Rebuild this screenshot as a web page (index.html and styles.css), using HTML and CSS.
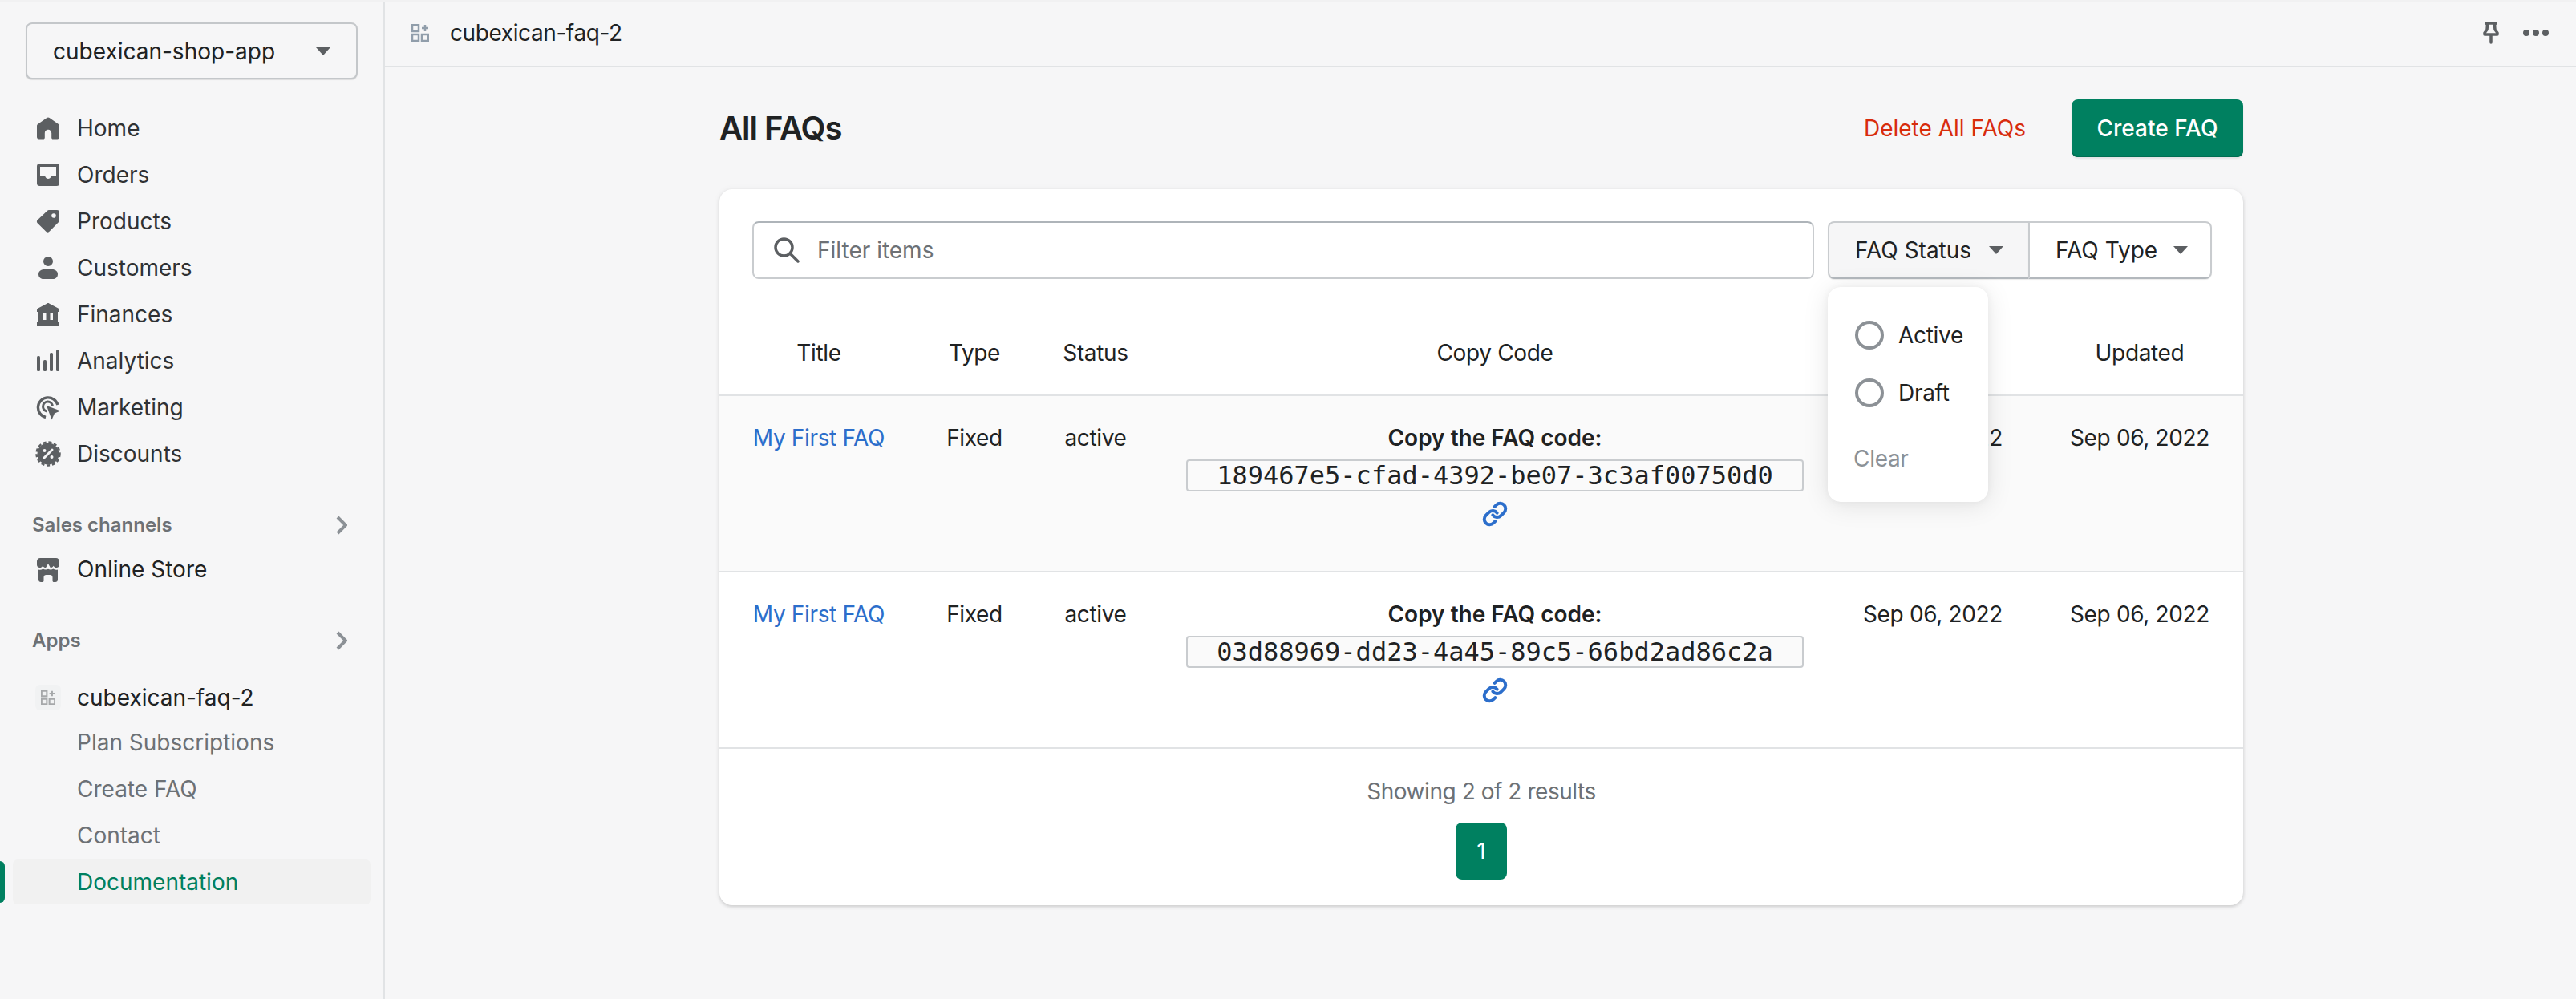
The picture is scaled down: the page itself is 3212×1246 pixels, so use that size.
FILE: index.html
```html
<!DOCTYPE html>
<html lang="en">

<head>
    <meta charset="UTF-8">
    <title>All FAQs</title>
    <link rel="stylesheet" href="styles.css">
</head>

<body>
    <div class="app">
        <aside class="sidebar">
            <div class="store-select">
                <span>cubexican-shop-app</span>
                <span class="caret"></span>
            </div>

            <nav class="nav-main">
                <a class="nav-link">
                    <svg class="nav-icon" viewBox="-2 -2 32 32"><path d="M14 .5c.6 0 1.1.2 1.6.5l11 7.7c.9.6 1.4 1.5 1.4 2.6V25c0 1.4-1.1 2.5-2.5 2.5H20c-1 0-1.8-.8-1.8-1.8V20c0-2.3-1.9-4.2-4.2-4.2S9.800 17.700 9.800 20v5.700c0 1-.8 1.800-1.800 1.800H2.500C1.100 27.500 0 26.400 0 25V11.300C0 10.200.5 9.300 1.400 8.700l11-7.700c.5-.3 1-.5 1.600-.5z"/></svg>
                    Home
                </a>
                <a class="nav-link">
                    <svg class="nav-icon" viewBox="-2 -2 32 32"><path fill-rule="evenodd" d="M3.500 0h21A3.500 3.500 0 0 1 28 3.500v21a3.500 3.500 0 0 1-3.500 3.500h-21A3.500 3.500 0 0 1 0 24.500v-21A3.500 3.500 0 0 1 3.500 0zM4 4v11h4.500c1 0 1.700.6 2 1.500.5 1.500 1.900 2.500 3.500 2.500s3-1 3.500-2.500c.3-.9 1-1.500 2-1.500H24V4z"/></svg>
                    Orders
                </a>
                <a class="nav-link">
                    <svg class="nav-icon" viewBox="-2 -2 32 32"><path fill-rule="evenodd" d="M15 0h10a3 3 0 0 1 3 3v10c0 .8-.3 1.600-.9 2.100L15.500 26.800a3 3 0 0 1-4.200 0L.9 16.400a3 3 0 0 1 0-4.200L12.900.9A3 3 0 0 1 15 0zm6 4.200a2.800 2.800 0 1 0 0 5.600 2.800 2.800 0 0 0 0-5.600z"/></svg>
                    Products
                </a>
                <a class="nav-link">
                    <svg class="nav-icon" viewBox="-2 -2 32 32"><circle cx="14" cy="6" r="6"/><path d="M9 16h10c4 0 7 2.500 7 6 0 3.500-2.500 6-6 6H8c-3.500 0-6-2.500-6-6 0-3.500 3-6 7-6z"/></svg>
                    Customers
                </a>
                <a class="nav-link">
                    <svg class="nav-icon" viewBox="-2 -2 32 32"><path fill-rule="evenodd" d="M12.800.4c.8-.4 1.600-.4 2.400 0l11.300 6.200c.9.500 1.500 1.400 1.500 2.400v2h-2v12h.5c.8 0 1.500.7 1.500 1.500V28H0v-3.500C0 23.700.7 23 1.500 23H2V11H0V9c0-1 .6-1.900 1.500-2.400zM8 12.500V21h3.500v-8.500zM16.500 12.500V21H20v-8.500z"/></svg>
                    Finances
                </a>
                <a class="nav-link">
                    <svg class="nav-icon" viewBox="-2 -2 32 32"><rect x="0" y="8" width="4" height="19" rx="1.500"/><rect x="8" y="13" width="4" height="14" rx="1.500"/><rect x="16" y="4" width="4" height="23" rx="1.500"/><rect x="24" y="0" width="4" height="27" rx="1.500"/></svg>
                    Analytics
                </a>
                <a class="nav-link">
                    <svg class="nav-icon" viewBox="-2 -2 32 32"><path d="M11 26.500A12.500 12.500 0 1 1 26 11" fill="none" stroke="#5c5f62" stroke-width="3.400"/><path d="M12.500 19A6 6 0 1 1 19.500 12" fill="none" stroke="#5c5f62" stroke-width="3"/><path d="M12 12l17.500 6.500-7.500 3-3.500 8z"/></svg>
                    Marketing
                </a>
                <a class="nav-link">
                    <svg class="nav-icon" viewBox="-2 -2 32 32"><circle cx="14" cy="14" r="13.500"/><circle cx="14" cy="14" r="14.500" fill="none" stroke="#5c5f62" stroke-width="2.500" stroke-dasharray="4 2.830"/><path d="M9 19l10-10" stroke="#f6f6f7" stroke-width="3" stroke-linecap="round"/><circle cx="9.500" cy="10" r="2" fill="#f6f6f7"/><circle cx="18.500" cy="18" r="2" fill="#f6f6f7"/></svg>
                    Discounts
                </a>
            </nav>

            <div class="nav-section">
                <span>Sales channels</span>
                <svg class="chevron" viewBox="0 0 14 24"><path d="M2 2l10 10L2 22"/></svg>
            </div>
            <a class="nav-link nav-link-dark">
                <svg class="nav-icon" viewBox="-2 -2 32 32"><path d="M4 0h20c2.200 0 4 1.800 4 4v4.500c0 2-1.600 3.500-3.500 3.500-1.600 0-3.100-.9-3.800-2.300-.8 1.400-2.200 2.300-3.900 2.300L14 7l-2.800 5c-1.700 0-3.100-.9-3.900-2.300C6.600 11.100 5.100 12 3.500 12 1.600 12 0 10.500 0 8.500V4c0-2.200 1.800-4 4-4z"/><path d="M2 14.500c2 .5 4 .2 5.500-1 1.900 1.200 4.600 1.400 6.500.2 1.900 1.200 4.600 1 6.500-.2 1.500 1.200 3.500 1.500 5.500 1V27c0 1.700-1.300 3-3 3h-2c-.8 0-1.500-.7-1.500-1.500V24c0-1.700-1.300-3-3-3h-5c-1.700 0-3 1.300-3 3v4.500c0 .8-.7 1.500-1.500 1.500H5c-1.700 0-3-1.300-3-3z"/></svg>
                Online Store
            </a>

            <div class="nav-section">
                <span>Apps</span>
                <svg class="chevron" viewBox="0 0 14 24"><path d="M2 2l10 10L2 22"/></svg>
            </div>
            <a class="nav-link nav-link-app">
                <span class="app-tile">
                    <svg class="grid-icon" viewBox="0 0 22 22"><path d="M1 1h8v8H1zM1 13h8v8H1zM13 13h8v8h-8zM17 1v8M13 5h8"/></svg>
                </span>
                cubexican-faq-2
            </a>
            <a class="nav-link nav-sub">Plan Subscriptions</a>
            <a class="nav-link nav-sub">Create FAQ</a>
            <a class="nav-link nav-sub">Contact</a>
            <a class="nav-link nav-sub nav-active">Documentation</a>
        </aside>

        <div class="main">
            <header class="topbar">
                <div class="topbar-title">
                    <svg class="grid-icon topbar-grid" viewBox="0 0 22 22"><path d="M1 1h8v8H1zM1 13h8v8H1zM13 13h8v8h-8zM17 1v8M13 5h8"/></svg>
                    cubexican-faq-2
                </div>
                <div class="topbar-actions">
                    <svg class="pin-icon" viewBox="0 0 20 28"><path d="M4 2h12l-1.500 2 .5 6 3 4v2H2v-2l3-4 .5-6zM10 17v9"/></svg>
                    <span class="dots"><i></i><i></i><i></i></span>
                </div>
            </header>

            <main class="page">
                <div class="page-header">
                    <h1>All FAQs</h1>
                    <div class="page-actions">
                        <a class="delete-link">Delete All FAQs</a>
                        <button class="btn-primary">Create FAQ</button>
                    </div>
                </div>

                <section class="card">
                    <div class="filters">
                        <div class="search-box">
                            <svg class="search-icon" viewBox="0 0 32 32"><circle cx="12.500" cy="12.500" r="10.500"/><path d="M20 20l10 10"/></svg>
                            <span class="placeholder">Filter items</span>
                        </div>
                        <div class="filter-group">
                            <button class="filter-btn filter-btn-open">FAQ Status <span class="caret"></span></button>
                            <button class="filter-btn">FAQ Type <span class="caret"></span></button>

                            <div class="popover">
                                <label class="pop-option"><span class="radio"></span>Active</label>
                                <label class="pop-option"><span class="radio"></span>Draft</label>
                                <a class="pop-clear">Clear</a>
                            </div>
                        </div>
                    </div>

                    <table class="faq-table">
                        <colgroup>
                            <col class="col-title">
                            <col class="col-type">
                            <col class="col-status">
                            <col class="col-code">
                            <col class="col-date">
                            <col class="col-date">
                        </colgroup>
                        <thead>
                            <tr>
                                <th>Title</th>
                                <th>Type</th>
                                <th>Status</th>
                                <th>Copy Code</th>
                                <th>Created</th>
                                <th>Updated</th>
                            </tr>
                        </thead>
                        <tbody>
                            <tr class="row-hover">
                                <td><a class="faq-link">My First FAQ</a></td>
                                <td>Fixed</td>
                                <td>active</td>
                                <td>
                                    <div class="code-label">Copy the FAQ code:</div>
                                    <div class="code-box">189467e5-cfad-4392-be07-3c3af00750d0</div>
                                    <svg class="link-icon" viewBox="0 0 24 24"><path d="M10 13a5 5 0 0 0 7.540.54l3-3a5 5 0 0 0-7.070-7.070l-1.720 1.710"/><path d="M14 11a5 5 0 0 0-7.540-.54l-3 3a5 5 0 0 0 7.070 7.070l1.710-1.710"/></svg>
                                </td>
                                <td>Sep 06, 2022</td>
                                <td>Sep 06, 2022</td>
                            </tr>
                            <tr>
                                <td><a class="faq-link">My First FAQ</a></td>
                                <td>Fixed</td>
                                <td>active</td>
                                <td>
                                    <div class="code-label">Copy the FAQ code:</div>
                                    <div class="code-box">03d88969-dd23-4a45-89c5-66bd2ad86c2a</div>
                                    <svg class="link-icon" viewBox="0 0 24 24"><path d="M10 13a5 5 0 0 0 7.540.54l3-3a5 5 0 0 0-7.070-7.070l-1.720 1.710"/><path d="M14 11a5 5 0 0 0-7.540-.54l-3 3a5 5 0 0 0 7.070 7.070l1.710-1.710"/></svg>
                                </td>
                                <td>Sep 06, 2022</td>
                                <td>Sep 06, 2022</td>
                            </tr>
                        </tbody>
                    </table>

                    <div class="card-footer">
                        <div class="results">Showing 2 of 2 results</div>
                        <button class="page-num">1</button>
                    </div>
                </section>
            </main>
        </div>
    </div>
</body>

</html>
```

FILE: styles.css
```css
* {
    box-sizing: border-box;
}

body {
    margin: 0;
    background-color: #f6f6f7;
    color: #202223;
    font-family: Inter, "Liberation Sans", sans-serif;
    font-size: 28px;
    line-height: 40px;
}

.app {
    display: flex;
    height: 1246px;
    overflow: hidden;
    border-top: 2px solid #f1f1f2;
}

/* sidebar */
.sidebar {
    width: 480px;
    flex-shrink: 0;
    padding-top: 26px;
    border-right: 2px solid #e1e3e5;
}

.store-select {
    display: flex;
    align-items: center;
    justify-content: space-between;
    height: 71px;
    margin: 0 32px;
    padding: 0 32px 0 32px;
    background-color: #f6f6f7;
    border: 2px solid #c4c7ca;
    border-radius: 8px;
    box-shadow: 0 1px 1px rgba(0, 0, 0, 0.1);
}

.caret {
    display: inline-block;
    width: 0;
    height: 0;
    border-left: 9px solid transparent;
    border-right: 9px solid transparent;
    border-top: 10px solid #5c5f62;
}

.nav-main {
    margin-top: 32px;
}

.nav-link {
    position: relative;
    display: flex;
    align-items: center;
    gap: 20px;
    height: 58px;
    margin: 0 16px;
    padding-left: 28px;
    color: #303234;
}

.nav-link-dark {
    color: #202223;
}

.nav-icon {
    width: 32px;
    height: 32px;
    flex-shrink: 0;
    fill: #5c5f62;
}

.nav-section {
    display: flex;
    align-items: center;
    justify-content: space-between;
    height: 52px;
    margin-top: 34px;
    padding: 0 45px 0 40px;
    color: #6d7175;
    font-size: 24px;
    font-weight: 600;
}

.chevron {
    width: 14px;
    height: 24px;
    fill: none;
    stroke: #8c9196;
    stroke-width: 4;
}

.nav-link-app {
    height: 56px;
    margin-top: 17px;
    color: #202223;
}

.app-tile {
    display: flex;
    align-items: center;
    justify-content: center;
    width: 32px;
    height: 32px;
    background-color: #f1f2f3;
    border-radius: 6px;
}

.grid-icon {
    width: 18px;
    height: 18px;
    fill: none;
    stroke: #a6a8aa;
    stroke-width: 2.5;
}

.nav-sub {
    height: 56px;
    margin-bottom: 2px;
    padding-left: 80px;
    color: #6d7175;
}

.nav-active {
    color: #008060;
    background-color: #f1f1f1;
    border-radius: 6px;
}

.nav-active::before {
    content: "";
    position: absolute;
    left: -16px;
    top: 2px;
    bottom: 2px;
    width: 6px;
    background-color: #008060;
    border-radius: 0 6px 6px 0;
}

/* main column */
.main {
    flex: 1;
    min-width: 0;
}

.topbar {
    display: flex;
    align-items: center;
    justify-content: space-between;
    height: 82px;
    padding: 0 34px 2px 33px;
    border-bottom: 2px solid #e1e3e5;
}

.topbar-title {
    display: flex;
    align-items: center;
    gap: 26px;
    letter-spacing: -0.4px;
}

.topbar-grid {
    width: 22px;
    height: 22px;
    stroke: #919eab;
}

.topbar-actions {
    display: flex;
    align-items: center;
    gap: 30px;
}

.pin-icon {
    width: 20px;
    height: 28px;
    fill: none;
    stroke: #5c5f62;
    stroke-width: 3.5;
    stroke-linejoin: round;
    stroke-linecap: round;
}

.dots {
    display: flex;
    gap: 4px;
}

.dots i {
    width: 8px;
    height: 8px;
    background-color: #5c5f62;
    border-radius: 50%;
}

.page {
    width: 1900px;
    margin-left: 417px;
    padding-top: 40px;
}

.page-header {
    display: flex;
    align-items: center;
    justify-content: space-between;
    height: 72px;
    margin-bottom: 40px;
}

h1 {
    margin: 0;
    font-size: 40px;
    font-weight: 600;
    letter-spacing: -1px;
}

.page-actions {
    display: flex;
    align-items: center;
    gap: 57px;
}

.delete-link {
    color: #d82c0d;
}

button {
    font: inherit;
    cursor: pointer;
}

.btn-primary {
    width: 214px;
    height: 72px;
    padding: 0;
    color: #fff;
    font-weight: 500;
    background-color: #008060;
    border: none;
    border-radius: 8px;
    box-shadow: inset 0 -2px 0 #006e52, 0 2px 2px rgba(0, 0, 0, 0.08);
}

.card {
    background-color: #fff;
    border-radius: 16px;
    box-shadow: 0 0 8px rgba(23, 24, 24, 0.05), 0 2px 4px rgba(0, 0, 0, 0.15);
}

.filters {
    display: flex;
    gap: 17px;
    padding: 40px 39px 0 41px;
}

.search-box {
    display: flex;
    flex: 1;
    align-items: center;
    gap: 22px;
    height: 72px;
    padding-left: 25px;
    border: 2px solid #c9cccf;
    border-top-color: #aeb4b9;
    border-radius: 8px;
}

.search-icon {
    width: 32px;
    height: 32px;
    fill: none;
    stroke: #5c5f62;
    stroke-width: 3.5;
    stroke-linecap: round;
}

.placeholder {
    color: #6d7175;
}

.filter-group {
    position: relative;
    display: flex;
    height: 72px;
}

.filter-btn {
    display: flex;
    align-items: center;
    gap: 20px;
    padding: 0 32px;
    color: #202223;
    white-space: nowrap;
    background-color: #fff;
    border: 2px solid #c9cccf;
    border-bottom-color: #b3b8bd;
    border-radius: 0 8px 8px 0;
    box-shadow: 0 1px 1px rgba(0, 0, 0, 0.08);
}

.filter-btn-open {
    gap: 22px;
    width: 250px;
    background-color: #f6f6f7;
    border-right: none;
    border-radius: 8px 0 0 8px;
}

.filter-btn-open + .filter-btn {
    width: 229px;
}

.popover {
    position: absolute;
    top: 82px;
    left: 0;
    z-index: 2;
    width: 200px;
    height: 268px;
    padding-top: 24px;
    background-color: #fff;
    border-radius: 16px;
    box-shadow: 0 0 10px rgba(23, 24, 24, 0.05), 0 4px 32px rgba(23, 24, 24, 0.1);
    letter-spacing: -0.3px;
}

.pop-option {
    display: flex;
    align-items: center;
    gap: 18px;
    height: 72px;
    padding-left: 34px;
}

.radio {
    width: 36px;
    height: 36px;
    border: 4px solid #8c9196;
    border-radius: 50%;
}

.pop-clear {
    display: block;
    margin-top: 26px;
    padding-left: 32px;
    color: #8c9196;
}

.faq-table {
    width: 100%;
    table-layout: fixed;
    border-collapse: separate;
    border-spacing: 0;
    letter-spacing: -0.35px;
    text-align: center;
}

.col-title {
    width: 248px;
}

.col-type {
    width: 140px;
}

.col-status {
    width: 162px;
}

.col-code {
    width: 834px;
}

.col-date {
    width: 258px;
}

th {
    height: 146px;
    padding: 72px 0 32px;
    font-weight: 400;
    border-bottom: 2px solid #e1e3e5;
}

td {
    height: 220px;
    padding: 32px 0 0;
    vertical-align: top;
    border-bottom: 2px solid #e1e3e5;
}

.row-hover td {
    background-color: #fafafa;
}

.faq-link {
    color: #2c6ecb;
}

.code-label {
    font-weight: 600;
    letter-spacing: 0;
}

.code-box {
    width: 770px;
    height: 40px;
    margin: 7px auto 0;
    color: #202223;
    font-family: "DejaVu Sans Mono", monospace;
    font-size: 32px;
    line-height: 36px;
    letter-spacing: 0;
    background-color: #fafafa;
    border: 2px solid #c9cccf;
    border-radius: 4px;
}

.link-icon {
    display: block;
    width: 32px;
    height: 32px;
    margin: 12px auto 0;
    fill: none;
    stroke: #2c6ecb;
    stroke-width: 3;
    stroke-linecap: round;
    stroke-linejoin: round;
}

.card-footer {
    display: flex;
    flex-direction: column;
    align-items: center;
    gap: 19px;
    padding: 33px 0 32px;
}

.results {
    color: #6d7175;
    letter-spacing: -0.45px;
}

.page-num {
    width: 64px;
    height: 71px;
    padding: 0;
    color: #fff;
    background-color: #008060;
    border: none;
    border-radius: 8px;
}
```
